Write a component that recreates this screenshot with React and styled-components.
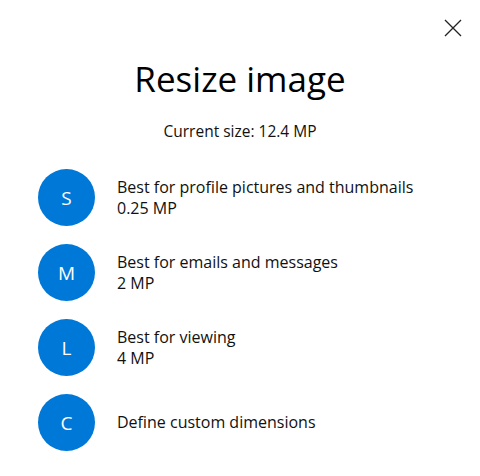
import React from "react";
import styled, { createGlobalStyle } from "styled-components";

const GlobalStyle = createGlobalStyle`
  body {
    margin: 0;
    background: #ffffff;
    font-family: "Segoe UI", "Open Sans", sans-serif;
  }
`;

const Page = styled.div`
  width: 480px;
  height: 476px;
  background: #ffffff;
  color: #111111;
  box-sizing: border-box;
`;

const TopBar = styled.div`
  display: flex;
  justify-content: flex-end;
  padding: 16px 15px 0 0;
`;

const CloseButton = styled.button`
  width: 24px;
  height: 24px;
  padding: 0;
  border: none;
  background: transparent;
  display: flex;
  align-items: center;
  justify-content: center;
  cursor: pointer;
`;

const Title = styled.h1`
  margin: 17px 0 0;
  font-size: 35px;
  font-weight: 400;
  line-height: 44px;
  text-align: center;
  color: #000000;
`;

const Subtitle = styled.p`
  margin: 20px 0 0;
  font-size: 15.5px;
  line-height: 20px;
  text-align: center;
`;

const OptionList = styled.div`
  display: flex;
  flex-direction: column;
  gap: 18px;
  margin-top: 28px;
  padding-left: 38px;
`;

const Option = styled.div`
  display: flex;
  align-items: center;
  gap: 22px;
  cursor: pointer;
`;

const Badge = styled.div`
  width: 57px;
  height: 57px;
  flex-shrink: 0;
  border-radius: 50%;
  background: #0078d7;
  color: #ffffff;
  display: flex;
  align-items: center;
  justify-content: center;
  font-size: 19px;
`;

const OptionText = styled.div`
  display: flex;
  flex-direction: column;
  font-size: 16px;
  line-height: 21px;
`;

const options = [
  { letter: "S", label: "Best for profile pictures and thumbnails", size: "0.25 MP" },
  { letter: "M", label: "Best for emails and messages", size: "2 MP" },
  { letter: "L", label: "Best for viewing", size: "4 MP" },
  { letter: "C", label: "Define custom dimensions" },
];

const App = () => {
  return (
    <Page>
      <GlobalStyle />
      <TopBar>
        <CloseButton type="button" aria-label="Close">
          <svg width="20" height="20" viewBox="0 0 20 20">
            <path d="M2 2 L18 18 M18 2 L2 18" stroke="#222" strokeWidth="1.3" fill="none" />
          </svg>
        </CloseButton>
      </TopBar>
      <Title>Resize image</Title>
      <Subtitle>Current size: 12.4 MP</Subtitle>
      <OptionList>
        {options.map((o) => (
          <Option key={o.letter}>
            <Badge>{o.letter}</Badge>
            <OptionText>
              <span>{o.label}</span>
              {o.size && <span>{o.size}</span>}
            </OptionText>
          </Option>
        ))}
      </OptionList>
    </Page>
  );
};

export default App;
